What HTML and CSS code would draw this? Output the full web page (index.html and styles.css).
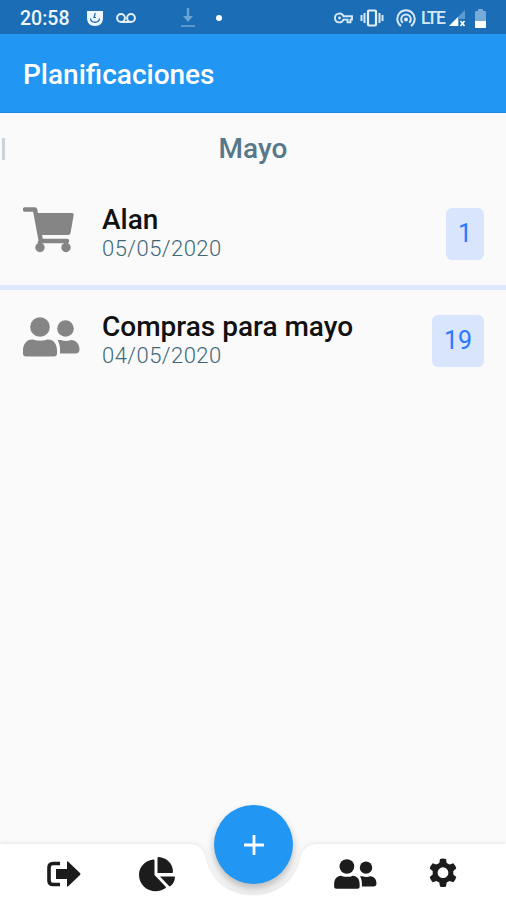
FILE: index.html
```html
<!DOCTYPE html>
<html lang="es">
<head>
    <meta charset="UTF-8">
    <meta name="viewport" content="width=device-width, initial-scale=1.0">
    <title>Planificaciones</title>
    <link rel="stylesheet" href="styles.css">
</head>
<body>
    <svg class="sprite" aria-hidden="true">
        <symbol id="users" viewBox="0 0 57 40">
            <circle cx="17" cy="10" r="9.8"/>
            <path d="M10 22.500c4.500 1.600 10.500 1.600 14 0 6.500-.5 10 4.500 10 11v3c0 2-1 3-3 3H3c-2 0-3-1-3-3v-3c0-6.500 4-11.500 10-11z"/>
            <circle cx="42.500" cy="11.500" r="8.300"/>
            <path d="M34.500 23h3.500c3 1.400 7 1.400 10 0 5 0 8.500 4 8.500 9.500 0 2.500-1.500 4-4 4H37c.500-6-.500-10-2.500-13.500z"/>
        </symbol>
    </svg>

    <!-- Barra de estado -->
    <div class="status-bar">
        <span class="time">20:58</span>
        <svg class="icon-face" width="18" height="17" viewBox="0 0 18 17">
            <path d="M1 1h16v7c0 5-3 8-8 8s-8-3-8-8z" fill="#eef6ff"/>
            <path d="M4.500 8.500c.5 5 8.500 5 9 0" fill="none" stroke="#1b6eb5" stroke-width="1.300"/>
            <path d="M9.300 3L8 7.500h2" fill="none" stroke="#1b6eb5" stroke-width="1.200"/>
        </svg>
        <svg class="icon-voicemail" width="20" height="12" viewBox="0 0 20 12">
            <path d="M5 10h10" stroke="#e3effa" stroke-width="2"/>
            <circle cx="5" cy="6" r="3.900" fill="none" stroke="#e3effa" stroke-width="2"/>
            <circle cx="15" cy="6" r="3.900" fill="none" stroke="#e3effa" stroke-width="2"/>
        </svg>
        <svg class="icon-download" width="16" height="20" viewBox="0 0 16 20">
            <path d="M8 0v10" stroke="#6ba3d3" stroke-width="2.400"/>
            <path d="M3 8h10l-5 6z" fill="#6ba3d3"/>
            <path d="M1 18h14" stroke="#6ba3d3" stroke-width="1.600"/>
        </svg>
        <span class="dot"></span>
        <svg class="icon-key" width="19" height="12" viewBox="0 0 19 12">
            <path d="M9.500 4.200H18v3.400h-1.500v2.600h-3V7.600h-4C7.500 12 1 11 1 6S7.500 0 9.500 4.200z" fill="none" stroke="#d7e8f7" stroke-width="1.900"/>
            <circle cx="5.500" cy="6" r="1.400" fill="#d7e8f7"/>
        </svg>
        <svg class="icon-vibrate" width="24" height="18" viewBox="0 0 24 18">
            <path d="M1.500 6v6M4.500 4v10M19.500 4v10M22.500 6v6" stroke="#d7e8f7" stroke-width="2"/>
            <rect x="8" y="1.500" width="8" height="15" rx="1" fill="none" stroke="#e3effa" stroke-width="2.200"/>
        </svg>
        <svg class="icon-hotspot" width="20" height="19" viewBox="0 0 20 19">
            <g fill="none" stroke="#d7e8f7" stroke-width="2">
                <path d="M5 17a8.700 8.700 0 1 1 10 0"/>
                <path d="M6.800 13.800a4.800 4.800 0 1 1 6.400 0"/>
            </g>
            <circle cx="10" cy="10.500" r="2" fill="#e3effa"/>
        </svg>
        <span class="network">LTE</span>
        <svg class="icon-signal" width="17" height="18" viewBox="0 0 17 18">
            <path d="M16 1v16H0z" fill="#5e9bd0"/>
            <path d="M9 8v9H0z" fill="#fff"/>
            <path d="M10 10h7v8h-7z" fill="#1b6eb5"/>
            <path d="M11.500 12l4 5M15.500 12l-4 5" stroke="#fff" stroke-width="1.700"/>
        </svg>
        <svg class="icon-battery" width="11" height="19" viewBox="0 0 11 19">
            <path d="M3 0h5v2h2q1 0 1 1v15q0 1-1 1H1q-1 0-1-1V3q0-1 1-1h2z" fill="#76abd9"/>
            <path d="M0 12h11v6q0 1-1 1H1q-1 0-1-1z" fill="#fff"/>
        </svg>
    </div>

    <header class="app-bar">
        <h1>Planificaciones</h1>
    </header>

    <main class="content">
        <div class="month">
            <span class="month-prev"></span>
            <h2>Mayo</h2>
        </div>

        <ul class="plan-list">
            <li class="plan">
                <svg class="plan-icon plan-icon-cart" viewBox="0 0 57 50">
                    <path d="M2 2.500h10l6 32" fill="none" stroke="#858585" stroke-width="4.500" stroke-linejoin="round" stroke-linecap="round"/>
                    <path d="M12 6h37q2 0 1.700 2l-3.200 18q-.4 2-2.500 2H16z"/>
                    <path d="M18 34h26" stroke="#858585" stroke-width="4.500" stroke-linecap="round"/>
                    <circle cx="17" cy="40.500" r="4.700"/>
                    <circle cx="43" cy="40.500" r="4.700"/>
                    <path d="M14.800 34h4v6h-4zM41 34h4v6h-4z"/>
                </svg>
                <div class="plan-info">
                    <h3>Alan</h3>
                    <p>05/05/2020</p>
                </div>
                <span class="badge">1</span>
            </li>
            <li class="plan">
                <svg class="plan-icon plan-icon-users"><use href="#users"/></svg>
                <div class="plan-info">
                    <h3>Compras para mayo</h3>
                    <p>04/05/2020</p>
                </div>
                <span class="badge">19</span>
            </li>
        </ul>
    </main>

    <!-- Menú inferior -->
    <nav class="bottom-bar">
        <svg class="bar-shape" viewBox="0 0 506 76">
            <path d="M0 20H188C200 20 204 26 206 35C211 58 230 71 253 71S295 58 300 35C302 26 307 20 319 20H506V76H0z"/>
        </svg>
        <button class="fab" aria-label="Agregar">
            <svg width="22" height="22" viewBox="0 0 22 22">
                <path d="M11 1v20M1 11h20" stroke="#fff" stroke-width="2.800"/>
            </svg>
        </button>
        <a class="nav-exit" href="#" aria-label="Salir">
            <svg width="34" height="28" viewBox="0 0 34 28">
                <path d="M13 3.500H6Q2 3.500 2 7.500v13q0 4 4 4h7" fill="none" stroke="#1c1c1c" stroke-width="3.600"/>
                <path d="M9 9h11V2.500q0-2 1.500-.5l11.500 11q1 1 0 2l-11.500 11q-1.500 1.500-1.500-.5V19H9z"/>
            </svg>
        </a>
        <a class="nav-chart" href="#" aria-label="Gráficos">
            <svg width="37" height="36" viewBox="0 0 37 36">
                <path d="M14 2.500q1.500-.3 1.500 1V18l11 11.500q1 1-.2 1.800C15 39 0 31 0 18 0 10 6 3.500 14 2.500z"/>
                <path d="M18.500 1q0-1 1-1C28 .5 34 7 34 15q0 1-1 1H18.500z"/>
                <path d="M21 19.500h14q1 0 1 1c-.5 4-2 6.500-4.500 8.500q-.8.700-1.500 0z"/>
            </svg>
        </a>
        <a class="nav-users" href="#" aria-label="Usuarios">
            <svg width="43" height="30"><use href="#users"/></svg>
        </a>
        <a class="nav-settings" href="#" aria-label="Ajustes">
            <svg width="28" height="30" viewBox="0 0 28 30">
                <path fill-rule="evenodd" d="M11 1q3-1 6 0l.7 4 2.800 1.600 3.800-1.400q2.200 2.300 3 5.200l-3 2.600v3.500l3 2.600q-.8 3-3 5.200l-3.800-1.400-2.800 1.600-.7 4q-3 1-6 0l-.7-4-2.800-1.600-3.800 1.400q-2.200-2.300-3-5.200l3-2.600V13l-3-2.600q.8-2.900 3-5.200l3.800 1.400L10.300 5zM14 9.300a5.400 5.400 0 1 0 0 10.800 5.400 5.400 0 0 0 0-10.800z"/>
            </svg>
        </a>
    </nav>
</body>
</html>
```
FILE: styles.css
```css
* {
    box-sizing: border-box;
}
body {
    margin: 0;
    height: 100vh;
    display: flex;
    flex-direction: column;
    overflow: hidden;
    background-color: #fafafa;
    font-family: Roboto, sans-serif;
}
h1, h2, h3, p, ul {
    margin: 0;
    padding: 0;
}
svg {
    display: block;
    flex-shrink: 0;
}
.sprite {
    position: absolute;
    width: 0;
    height: 0;
}

/* barra de estado */
.status-bar {
    height: 34px;
    flex-shrink: 0;
    display: flex;
    align-items: center;
    padding: 2px 20px 0;
    background-color: #1b6eb5;
    color: #eef6ff;
}
.time {
    width: 50px;
    font-size: 19.5px;
    font-weight: 500;
}
.icon-face {
    margin-left: 16px;
}
.icon-voicemail {
    margin-left: 12px;
}
.icon-download {
    margin-left: 44px;
}
.dot {
    width: 6px;
    height: 6px;
    margin-left: 20px;
    border-radius: 50%;
    background-color: #fff;
}
.icon-key {
    margin-left: auto;
}
.icon-vibrate {
    margin-left: 7px;
}
.icon-hotspot {
    margin-left: 12px;
}
.network {
    width: 24px;
    margin-left: 5px;
    font-size: 17.5px;
    font-weight: 500;
    letter-spacing: -1.5px;
    color: #d7e8f7;
}
.icon-signal {
    margin-left: 4px;
}
.icon-battery {
    margin-left: 9px;
}

.app-bar {
    height: 79px;
    flex-shrink: 0;
    display: flex;
    align-items: center;
    padding: 3px 23px 0;
    background-color: #2196f3;
    border-bottom: 1px solid #1b89e3;
    color: #fff;
}
.app-bar h1 {
    font-size: 28px;
    font-weight: 500;
}

.content {
    flex: 1;
}
.month {
    height: 70px;
    padding-top: 1px;
    display: grid;
    grid-template-columns: 1fr auto 1fr;
    align-items: center;
    color: #56788a;
}
.month h2 {
    font-size: 28px;
    font-weight: 500;
}
.month-prev {
    width: 3px;
    height: 22px;
    margin-left: 2px;
    background-color: #c9d3d9;
}

/* lista de planificaciones */
.plan-list {
    list-style: none;
}
.plan {
    height: 102px;
    display: flex;
    align-items: center;
    padding: 0 22px 0 23px;
}
.plan + .plan {
    border-top: 5px solid #dfe8fd;
    height: 107px;
}
.plan-icon {
    width: 57px;
    height: 50px;
    fill: #858585;
}
.plan-icon-cart {
    margin-top: -4px;
}
.plan-icon-users {
    height: 40px;
    margin-top: -9px;
}
.plan-info {
    flex: 1;
    margin-left: 22px;
}
.plan-info h3 {
    font-size: 28px;
    font-weight: 500;
    line-height: 30px;
    color: #111;
}
.plan-info p {
    font-size: 22px;
    font-weight: 300;
    line-height: 28px;
    letter-spacing: 0.45px;
    color: #3f6877;
}
.badge {
    padding: 0 12px;
    border-radius: 6px;
    background-color: #d8e5fd;
    color: #2979ff;
    font-size: 25px;
    line-height: 52px;
}

/* menú inferior */
.bottom-bar {
    position: relative;
    height: 56px;
    flex-shrink: 0;
    display: flex;
    align-items: flex-start;
    fill: #1c1c1c;
}
.bottom-bar a {
    position: relative;
}
.bar-shape {
    position: absolute;
    left: 0;
    bottom: 0;
    width: 506px;
    height: 76px;
    fill: #fff;
    filter: drop-shadow(0 -1px 2px rgba(0, 0, 0, 0.08));
}
.fab {
    position: absolute;
    left: 50%;
    top: -39px;
    width: 79px;
    height: 79px;
    margin-left: -39px;
    padding: 0;
    border: none;
    border-radius: 50%;
    background-color: #2196f3;
    box-shadow: 0 5px 8px rgba(0, 0, 0, 0.26);
    display: flex;
    align-items: center;
    justify-content: center;
}
.nav-exit {
    margin: 16px 0 0 47px;
}
.nav-chart {
    margin: 13px 0 0 58px;
}
.nav-users {
    margin: 15px 0 0 158px;
}
.nav-settings {
    margin: 14px 0 0 52px;
}
```
